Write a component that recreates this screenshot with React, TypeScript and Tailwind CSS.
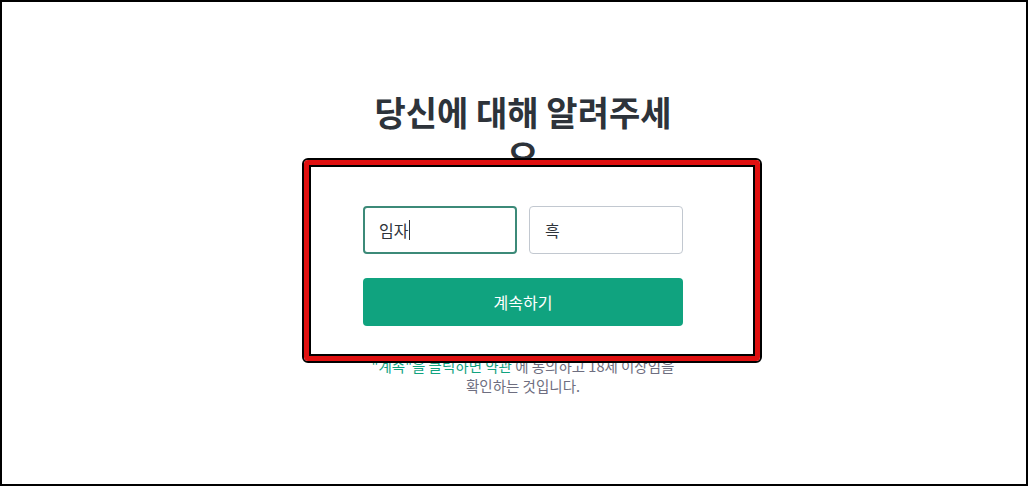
export default function App() {
  const font = { fontFamily: '"Noto Sans CJK KR", "Noto Sans", sans-serif' };
  return (
    <div className="relative h-[486px] w-[1028px] overflow-hidden border-2 border-black bg-white" style={font}>
      <div className="flex justify-center pl-[18px]">
        <div className="flex w-[320px] flex-col">
          <h1 className="mt-[88px] text-center text-[34px] font-bold leading-[44px] text-[#2d333a]">
            당신에 대해 알려주세요
          </h1>

          <div className="relative z-10 mt-[28px] flex gap-3">
            <div className="flex h-12 w-[154px] items-center rounded border-2 border-[#3c8a78] bg-white px-[14px] text-base text-[#2d333a]">
              임자
              <span className="ml-px h-[20px] w-px bg-[#2d333a]" />
            </div>
            <div className="flex h-12 w-[154px] items-center rounded border border-[#c2c8d0] bg-white px-[15px] text-base text-[#2d333a]">
              흑
            </div>
          </div>

          <button className="relative z-10 mt-6 h-12 w-full rounded bg-[#10a37f] text-base text-white">
            계속하기
          </button>

          <p className="mt-[30px] text-center text-[14.5px] leading-5 text-[#6e6e80]">
            <span className="text-[#10a37f]">"계속"을 클릭하면 약관</span> 에 동의하고 18세 이상임을
            <br />
            확인하는 것입니다.
          </p>
        </div>
      </div>

      {/* annotation box drawn over the form */}
      <div className="absolute left-[300px] top-[156px] h-[205px] w-[460px] rounded-md border-2 border-black">
        <div className="h-full w-full rounded-sm border-[5px] border-[#e01010]">
          <div className="h-full w-full border-2 border-black bg-white" />
        </div>
      </div>
    </div>
  );
}
